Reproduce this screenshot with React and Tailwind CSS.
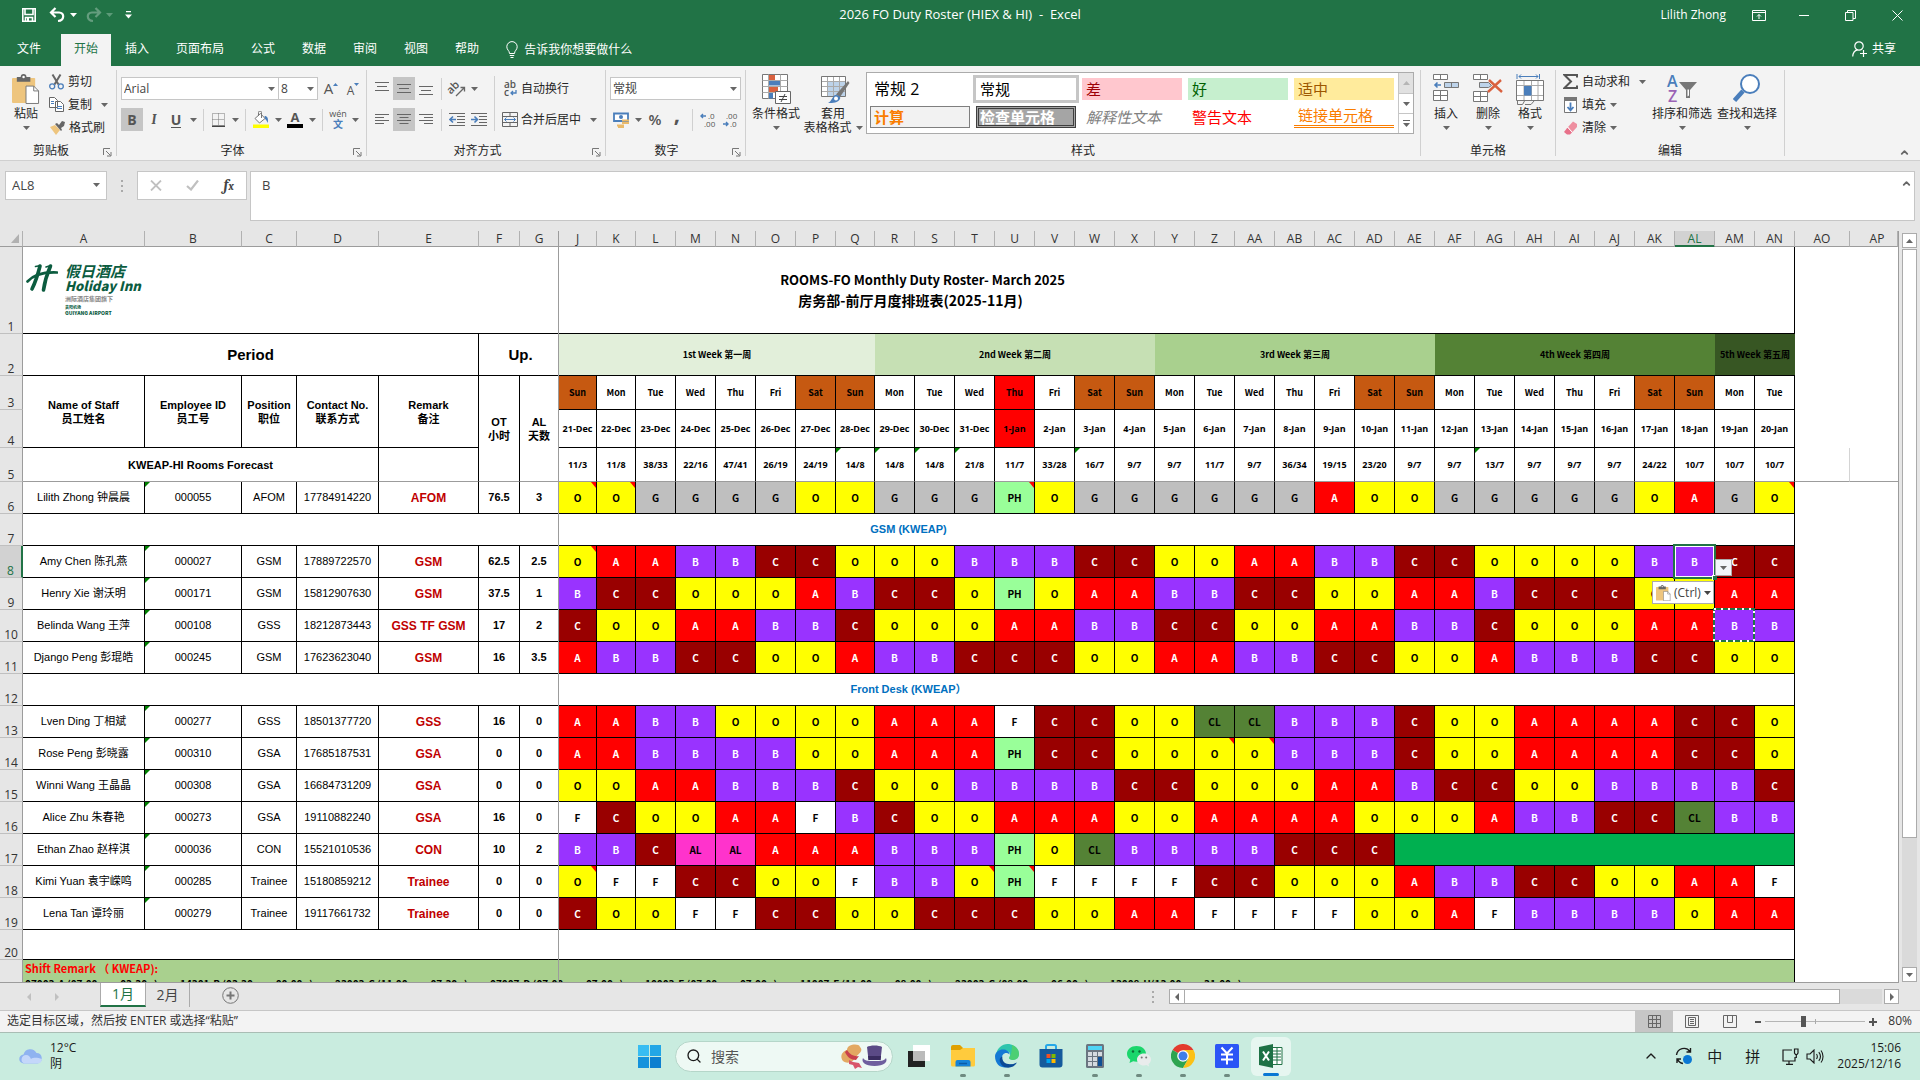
import { useState } from 'react';
import clsx from 'clsx';
import { Search, ChevronUp } from 'lucide-react';

const LEFT_COLS = [
  { name: 'A', width: 'w-[122px]' },
  { name: 'B', width: 'w-[97px]' },
  { name: 'C', width: 'w-[55px]' },
  { name: 'D', width: 'w-[82px]' },
  { name: 'E', width: 'w-[100px]' },
  { name: 'F', width: 'w-[41px]' },
  { name: 'G', width: 'w-[39px]' },
];

const DAY_COLS = 'J K L M N O P Q R S T U V W X Y Z AA AB AC AD AE AF AG AH AI AJ AK AL AM AN'.split(' ');
const WEEKDAYS = ['Sun', 'Mon', 'Tue', 'Wed', 'Thu', 'Fri', 'Sat'];
const FORECAST = '11/3 11/8 38/33 22/16 47/41 26/19 24/19 14/8 14/8 14/8 21/8 11/7 33/28 16/7 9/7 9/7 11/7 9/7 36/34 19/15 23/20 9/7 9/7 13/7 9/7 9/7 9/7 24/22 10/7 10/7 10/7'.split(' ');
const FORECAST_FLAGS = ['Q', 'R', 'S', 'T', 'W', 'AG'];

const WEEKS = [
  { label: '1st Week 第一周', span: 8, color: 'bg-[#e2efda]' },
  { label: '2nd Week 第二周', span: 7, color: 'bg-[#c6e0b4]' },
  { label: '3rd Week 第三周', span: 7, color: 'bg-[#a9d08e]' },
  { label: '4th Week 第四周', span: 7, color: 'bg-[#548235]' },
  { label: '5th Week 第五周', span: 2, color: 'bg-[#375623]' },
];

const SHIFT_COLORS = {
  A: 'bg-[#ff0000] text-white',
  B: 'bg-[#9933ff] text-white',
  C: 'bg-[#990000] text-white',
  O: 'bg-[#ffff00] text-black',
  G: 'bg-[#bfbfbf] text-black',
  F: 'bg-white text-black',
  PH: 'bg-[#99ff99] text-black',
  CL: 'bg-[#548235] text-black',
  AL: 'bg-[#ff33cc] text-black',
};

const ROWS = [
  { n: 6, name: 'Lilith Zhong 钟晨晨', id: '000055', pos: 'AFOM', tel: '17784914220', remark: 'AFOM', ot: '76.5', al: '3', notes: ['J', 'K', 'U', 'AN'],
    shifts: 'O O G G G G O O G G G PH O G G G G G G A O O G G G G G O A G O' },
  { n: 7, section: 'GSM (KWEAP)' },
  { n: 8, name: 'Amy Chen 陈孔燕', id: '000027', pos: 'GSM', tel: '17889722570', remark: 'GSM', ot: '62.5', al: '2.5', notes: ['J'],
    shifts: 'O A A B B C C O O O B B B C C O O A A B B C C O O O O B B C C' },
  { n: 9, name: 'Henry Xie 谢沃明', id: '000171', pos: 'GSM', tel: '15812907630', remark: 'GSM', ot: '37.5', al: '1',
    shifts: 'B C C O O O A B C C O PH O A A B B C C O O A A B C C C O O A A' },
  { n: 10, name: 'Belinda Wang 王萍', id: '000108', pos: 'GSS', tel: '18212873443', remark: 'GSS TF GSM', ot: '17', al: '2',
    shifts: 'C O O A A B B C O O O A A B B C C O O A A B B C O O O A A B B' },
  { n: 11, name: 'Django Peng 彭琨皓', id: '000245', pos: 'GSM', tel: '17623623040', remark: 'GSM', ot: '16', al: '3.5',
    shifts: 'A B B C C O O A B B C C C O O A A B B C C O O A B B B C C O O' },
  { n: 12, section: 'Front Desk (KWEAP）' },
  { n: 13, name: 'Lven Ding 丁相斌', id: '000277', pos: 'GSS', tel: '18501377720', remark: 'GSS', ot: '16', al: '0',
    shifts: 'A A B B O O O O A A A F C C O O CL CL B B B C O O A A A A C C O' },
  { n: 14, name: 'Rose Peng 彭晓露', id: '000310', pos: 'GSA', tel: '17685187531', remark: 'GSA', ot: '0', al: '0', notes: ['Z', 'AA'],
    shifts: 'A A B B B B O O A A A PH C C O O O O B B B C O O A A A A C C O' },
  { n: 15, name: 'Winni Wang 王晶晶', id: '000308', pos: 'GSA', tel: '16684731209', remark: 'GSA', ot: '0', al: '0',
    shifts: 'O O A A B B B C O O B B B B C C O O O A A B C C O O B B B B C' },
  { n: 16, name: 'Alice Zhu 朱春艳', id: '000273', pos: 'GSA', tel: '19110882240', remark: 'GSA', ot: '16', al: '0',
    shifts: 'F C O O A A F B C O O A A A O O A A A A O O O A B B C C CL B B' },
  { n: 17, name: 'Ethan Zhao 赵梓淇', id: '000036', pos: 'CON', tel: '15521010536', remark: 'CON', ot: '10', al: '2', blank: 10,
    shifts: 'B B C AL AL A A A B B B PH O CL B B B B C C C' },
  { n: 18, name: 'Kimi Yuan 袁宇嵘鸣', id: '000285', pos: 'Trainee', tel: '15180859212', remark: 'Trainee', ot: '0', al: '0', notes: ['J', 'T', 'U'],
    shifts: 'O F F C C O O F B B O PH F F F F C C O O O A B B C C O O A A F' },
  { n: 19, name: 'Lena Tan 谭玲丽', id: '000279', pos: 'Trainee', tel: '19117661732', remark: 'Trainee', ot: '0', al: '0',
    shifts: 'C O O F F C C O O C C C O O A A F F F F O O A F B B B B O A A' },
];

const SHIFT_TIMES = [
  ['07003-A (07:00', '03:30'],
  ['14301-B (03:30', '00:00'],
  ['23003-C (11:00', '07:30'],
  ['07007-D (07:00', '07:00'],
  ['10003-E (07:00', '07:00'],
  ['11007-F (11:00', '08:00'],
  ['23003-G (08:00', '06:00'],
  ['13008-H(13:00', '31:00'],
];

const ARIAL = "font-['Liberation_Sans','Noto_Sans_CJK_SC',sans-serif]";
const HEI = "font-['Noto_Sans_CJK_SC',sans-serif]";

/* ---------- small pieces ---------- */

function Caret({ className }) {
  return (
    <svg viewBox="0 0 7 4" className={clsx('h-1 w-[7px] shrink-0', className || 'text-[#666]')} fill="currentColor">
      <path d="M0 0h7L3.5 4z" />
    </svg>
  );
}

function CaretButton({ label }) {
  return (
    <button aria-label={label} className="flex h-full w-3 items-center justify-center"><Caret /></button>
  );
}

function Sep({ className }) {
  return <div className={clsx('ml-1 w-px shrink-0 bg-[#d0d0d0]', className || 'h-[22px]')} />;
}

function ToolButton({ label, active, className, children }) {
  return (
    <button
      aria-label={label}
      className={clsx('flex h-[23px] w-[22px] shrink-0 items-center justify-center', active && 'bg-[#c5c5c5]', className)}
    >
      {children}
    </button>
  );
}

function BigButton({ icon, lines, width }) {
  return (
    <button className={clsx('flex shrink-0 flex-col items-center pt-1', width)}>
      <span className="flex h-[30px] items-start justify-center">{icon}</span>
      <span className="mt-[3px] block h-[14px] whitespace-nowrap leading-[14px]">{lines[0]}</span>
      <span className="flex h-[14px] items-center gap-1 whitespace-nowrap leading-[14px]">{lines[1]}<Caret /></span>
    </button>
  );
}

function Group({ label, width, launcher, children }) {
  return (
    <section className={clsx('my-1 flex h-[86px] shrink-0 flex-col border-r border-[#d0d0d0]', width)}>
      <div className="flex h-[72px] shrink-0">{children}</div>
      <div className="relative h-[14px] text-center leading-[18px]">
        {label}
        {launcher && (
          <button aria-label={label + '设置'} className="absolute top-[6px] right-1">
            <svg width="9" height="9" viewBox="0 0 9 9" fill="none" stroke="#777">
              <path d="M.5 7V.5H7M3 3l4.500 4.500M8 4v4H4" />
            </svg>
          </button>
        )}
      </div>
    </section>
  );
}

/* ---------- title bar and tabs ---------- */

function TitleBar() {
  return (
    <header className="grid h-[34px] shrink-0 grid-cols-[1fr_auto_1fr] items-center bg-[#217346] text-white">
      <div className="flex items-center pl-[21px] pb-1">
        <button aria-label="保存">
          <svg width="16" height="16" viewBox="0 0 16 16" fill="none" stroke="#fff" strokeWidth="1.600">
            <path d="M1.800 1.800h12.400v12.400H1.800z" />
            <path d="M4 2v5.500h8V2M4.500 14v-3.500h7V14" />
            <path d="M6 11h2v3H6z" fill="#fff" stroke="none" />
          </svg>
        </button>
        <button aria-label="撤消" className="ml-3">
          <svg width="17" height="16" viewBox="0 0 17 16" fill="none" stroke="#fff" strokeWidth="2.200">
            <path d="M6.500 1L2 5.500 6.500 10M2.500 5.500h7.500c6 0 5.500 8-1 8.500" />
          </svg>
        </button>
        <Caret className="ml-1 text-white" />
        <button aria-label="恢复" className="ml-2 opacity-30">
          <svg width="17" height="16" viewBox="0 0 17 16" fill="none" stroke="#fff" strokeWidth="2.200">
            <path d="M10.500 1L15 5.500 10.500 10M14.500 5.500H7c-6 0-5.500 8 1 8.500" />
          </svg>
        </button>
        <Caret className="ml-1 text-[#5c9a78]" />
        <button aria-label="自定义快速访问工具栏" className="ml-3">
          <svg width="7" height="8" viewBox="0 0 7 8" fill="#fff"><path d="M1 0h5v1.300H1zM0 3.500h7L3.500 7.500z" /></svg>
        </button>
      </div>
      <h1 className="pb-1 text-[13px] whitespace-pre">2026 FO Duty Roster (HIEX &amp; HI)  -  Excel</h1>
      <div className="flex items-center justify-end pb-1">
        <span className="mr-[26px]">Lilith Zhong</span>
        <button aria-label="功能区显示选项" className="mr-[33px]">
          <svg width="14" height="11" viewBox="0 0 14 11" fill="none" stroke="#fff">
            <path d="M.5.5h13v10H.5zM.5 2.500h13M7 9V4.500M5 6.500l2-2 2 2" />
          </svg>
        </button>
        <button aria-label="最小化" className="mr-9"><span className="block h-px w-[10px] bg-white" /></button>
        <button aria-label="向下还原" className="mr-9">
          <svg width="11" height="11" viewBox="0 0 11 11" fill="none" stroke="#fff"><path d="M.5 2.500h7.500v8H.5zM2.500 2.500v-2h8v8H8" /></svg>
        </button>
        <button aria-label="关闭" className="mr-[17px]">
          <svg width="11" height="11" viewBox="0 0 11 11" stroke="#fff"><path d="M.5.5l10 10M10.500.5l-10 10" /></svg>
        </button>
      </div>
    </header>
  );
}

const TABS = ['开始', '插入', '页面布局', '公式', '数据', '审阅', '视图', '帮助'];

function TabBar({ tab, onTab }) {
  return (
    <nav className="flex h-8 shrink-0 items-stretch bg-[#217346] text-white">
      <button className="w-[61px] pr-[3px] pb-[2px]">文件</button>
      <div className="flex gap-px">
        {TABS.map((t) => (
          <button
            key={t}
            onClick={() => onTab(t)}
            className={clsx('px-[13px] pb-[2px]', t === tab && 'bg-[#f3f3f3] text-[#217346]')}
          >
            {t}
          </button>
        ))}
      </div>
      <button className="ml-[14px] flex items-center gap-[6px]">
        <svg width="12" height="18" viewBox="0 0 12 18" fill="none" stroke="#fff">
          <path d="M3.500 12.500C3.500 9.500.8 9 .8 5.800a5.200 5.200 0 0 1 10.400 0c0 3.200-2.700 3.700-2.700 6.700zM3.800 14.500h4.400M4.500 16.500h3" />
        </svg>
        告诉我你想要做什么
      </button>
      <button className="mr-6 ml-auto flex items-center gap-[5px] pb-[2px]">
        <svg width="15" height="16" viewBox="0 0 15 16" fill="none" stroke="#fff" strokeWidth="1.200">
          <circle cx="7" cy="5" r="4.200" />
          <path d="M.7 15.500c.3-4 2-6 4.800-6.600M11.500 9v7M8 12.500h7" />
        </svg>
        共享
      </button>
    </nav>
  );
}

/* ---------- ribbon ---------- */

function AlignIcon({ d }) {
  return <svg width="14" height="13" viewBox="0 0 14 13" stroke="#666" fill="none"><path d={d} /></svg>;
}

function PasteIcon({ className }) {
  return (
    <svg viewBox="0 0 29 31" className={className}>
      <rect x="0" y="4" width="24" height="26" rx="1" fill="#eec57e" />
      <path d="M5 8V3h4a3 3 0 0 1 6 0h4v5z" fill="#666" />
      <circle cx="12" cy="3" r="1.300" fill="#fff" />
      <path d="M14.500 12.500h8l5 5v13h-13z" fill="#fff" stroke="#777" />
      <path d="M22.500 12.500v5h5" fill="none" stroke="#777" />
    </svg>
  );
}

function ClipboardGroup() {
  const item = 'flex h-[23px] shrink-0 items-center gap-1 whitespace-nowrap';
  return (
    <Group label="剪贴板" width="w-[117px] pr-[14px] [&_button.absolute]:-right-[10px]" launcher>
      <BigButton width="ml-2 w-9" icon={<PasteIcon className="h-[30px] w-7" />} lines={['粘贴', '']} />
      <div className="ml-[5px] w-16 shrink-0">
        <button className={item}>
          <svg width="15" height="16" viewBox="0 0 15 16" fill="none" className="shrink-0">
            <path d="M3.500.5l6 10M11.500.5l-6 10" stroke="#666" strokeWidth="2" />
            <circle cx="3.200" cy="12.300" r="2.500" stroke="#4a7ebb" strokeWidth="1.300" />
            <circle cx="11.800" cy="12.300" r="2.500" stroke="#4a7ebb" strokeWidth="1.300" />
          </svg>
          剪切
        </button>
        <div className="flex items-center">
          <button className={item}>
            <svg width="15" height="15" viewBox="0 0 15 15" fill="#fff" stroke="#666" className="shrink-0">
              <path d="M.5.5h5l3 3v7h-8zM6.500 4.500h5l3 3v7h-8z" />
              <path d="M2 4.500h3M2 6.500h3M8 9.500h5M8 11.500h5" stroke="#4a7ebb" />
            </svg>
            复制
          </button>
          <span className="ml-[6px]"><CaretButton label="复制选项" /></span>
        </div>
        <button className={item}>
          <svg width="16" height="15" viewBox="0 0 16 15" className="shrink-0">
            <path d="M1 7l5-2 5 5-4 5z" fill="#eec57e" />
            <path d="M6 4l2-1 2 2 3-4 3 1-1 4-3 2 1 2-1 1z" fill="#666" />
          </svg>
          格式刷
        </button>
      </div>
    </Group>
  );
}

function FontGroup() {
  return (
    <Group label="字体" width="w-[250px] pr-[18px] [&_button.absolute]:-right-[14px]" launcher>
      <div className="flex flex-col gap-2 pt-[7px] pl-1">
        <div className="flex h-[23px] items-center">
          <div className="relative">
            <select aria-label="字体" className="h-[23px] w-[158px] appearance-none border border-[#c6c6c6] bg-white pl-[2px] text-[#444]">
              <option>Arial</option>
            </select>
            <Caret className="pointer-events-none absolute top-[10px] right-1 text-[#666]" />
          </div>
          <div className="relative -ml-px">
            <select aria-label="字号" className="h-[23px] w-10 appearance-none border border-[#c6c6c6] bg-white pl-[2px] text-[#444]">
              <option>8</option>
            </select>
            <Caret className="pointer-events-none absolute top-[10px] right-1 text-[#666]" />
          </div>
          <ToolButton label="增大字号" className="ml-[2px]">
            <span className="text-[15px] text-[#555]">A</span>
            <svg width="5" height="12" viewBox="0 0 5 12"><path d="M0 3h5L2.500 0z" fill="#4a7ebb" /></svg>
          </ToolButton>
          <ToolButton label="减小字号">
            <span className="pt-1 text-[12px] text-[#555]">A</span>
            <svg width="5" height="12" viewBox="0 0 5 12"><path d="M0 0h5L2.500 3z" fill="#4a7ebb" /></svg>
          </ToolButton>
        </div>
        <div className="flex h-[23px] items-center text-[14px] text-[#555]">
          <ToolButton label="加粗" active><b>B</b></ToolButton>
          <ToolButton label="倾斜"><i className="font-serif font-bold">I</i></ToolButton>
          <ToolButton label="下划线"><span className="border-b border-[#555] font-bold leading-[15px]">U</span></ToolButton>
          <CaretButton label="下划线选项" />
          <Sep />
          <ToolButton label="边框" className="ml-[3px]">
            <svg width="13" height="14" viewBox="0 0 13 14" fill="none" stroke="#777">
              <path d="M.5.5h12v12H.5zM6.500.5v12M.5 6.500h12" strokeDasharray="1 1" />
              <path d="M0 13.300h13" stroke="#444" strokeWidth="1.400" />
            </svg>
          </ToolButton>
          <CaretButton label="边框选项" />
          <Sep />
          <ToolButton label="填充颜色" className="ml-1">
            <svg width="16" height="17" viewBox="0 0 16 17" fill="none">
              <path d="M2 7.500L7.500 2.500l4.500 5-5.500 4.500z" stroke="#777" fill="#fff" />
              <path d="M5.500 5V1.500a1.500 1.500 0 0 1 3 0V7" stroke="#777" />
              <path d="M11.500 5c3 0 4 2.500 3.300 7-1-2-1.300-3-2.800-4z" fill="#4a7ebb" />
              <path d="M0 13.500h16V17H0z" fill="#ff0" />
            </svg>
          </ToolButton>
          <CaretButton label="填充颜色选项" />
          <ToolButton label="字体颜色" className="flex-col">
            <b className="text-[13px] leading-[12px]">A</b>
            <span className="mt-px h-1 w-4 bg-black" />
          </ToolButton>
          <CaretButton label="字体颜色选项" />
          <Sep />
          <ToolButton label="拼音" className="ml-1 flex-col">
            <span className="text-[9px] leading-[9px]">wén</span>
            <span className="text-[10px] leading-[12px] font-bold text-[#4a7ebb]">文</span>
          </ToolButton>
          <CaretButton label="拼音选项" />
        </div>
      </div>
    </Group>
  );
}

function AlignGroup() {
  return (
    <Group label="对齐方式" width="w-[239px] pr-[17px] [&_button.absolute]:-right-[13px]" launcher>
      <div className="flex w-[127px] shrink-0 flex-col gap-2 pt-[7px] pl-1">
        <div className="flex h-[23px] items-center">
          <ToolButton label="顶端对齐"><AlignIcon d="M0 .5h14M2 4.500h10M0 8.500h14" /></ToolButton>
          <ToolButton label="垂直居中" active><AlignIcon d="M0 2.500h14M2 6.500h10M0 10.500h14" /></ToolButton>
          <ToolButton label="底端对齐"><AlignIcon d="M0 4.500h14M2 8.500h10M0 12.500h14" /></ToolButton>
          <Sep />
          <ToolButton label="方向" className="ml-1">
            <svg width="17" height="16" viewBox="0 0 17 16" fill="none" stroke="#666" className="overflow-visible">
              <text x="-1" y="9" fontSize="11" fontWeight="600" fill="#555" stroke="none" transform="rotate(-45 6 8)">ab</text>
              <path d="M7 15l8-8M15.500 10.500V6.500H11.500" strokeWidth="1.300" />
            </svg>
          </ToolButton>
          <CaretButton label="方向选项" />
        </div>
        <div className="flex h-[23px] items-center">
          <ToolButton label="左对齐"><AlignIcon d="M0 1.500h14M0 4.500h9M0 7.500h14M0 10.500h9" /></ToolButton>
          <ToolButton label="居中" active><AlignIcon d="M0 1.500h14M2.500 4.500h9M0 7.500h14M2.500 10.500h9" /></ToolButton>
          <ToolButton label="右对齐"><AlignIcon d="M0 1.500h14M5 4.500h9M0 7.500h14M5 10.500h9" /></ToolButton>
          <Sep />
          <ToolButton label="减少缩进量" className="ml-1">
            <svg width="16" height="13" viewBox="0 0 16 13" fill="none" stroke="#666">
              <path d="M0 .5h16M8 3.500h8M8 6.500h8M8 9.500h8M0 12.500h16" />
              <path d="M7 6.500H1M4 3.500l-3 3 3 3" stroke="#4a7ebb" strokeWidth="1.600" />
            </svg>
          </ToolButton>
          <ToolButton label="增加缩进量">
            <svg width="16" height="13" viewBox="0 0 16 13" fill="none" stroke="#666">
              <path d="M0 .5h16M8 3.500h8M8 6.500h8M8 9.500h8M0 12.500h16" />
              <path d="M0 6.500h6M3.500 3.500l3 3-3 3" stroke="#4a7ebb" strokeWidth="1.600" />
            </svg>
          </ToolButton>
        </div>
      </div>
      <div className="mt-[6px] h-[55px] w-px shrink-0 bg-[#d0d0d0]" />
      <div className="flex shrink-0 flex-col gap-2 pt-[7px] pl-[7px]">
        <button className="flex h-[23px] items-center gap-[3px] whitespace-nowrap">
          <svg width="16" height="17" viewBox="0 0 16 17" fill="#555" className="overflow-visible">
            <text x="2" y="8" fontSize="10" fontWeight="600">ab</text>
            <text x="2" y="16" fontSize="10" fontWeight="600">c</text>
            <path d="M14 10v3H9.500M11 11l-2 2 2 2" fill="none" stroke="#4a7ebb" strokeWidth="1.300" />
          </svg>
          自动换行
        </button>
        <div className="flex h-[23px] items-center">
          <button className="flex h-full items-center gap-[3px] whitespace-nowrap">
            <svg width="16" height="15" viewBox="0 0 16 15" fill="none" stroke="#666">
              <path d="M.5.5h15v14H.5zM.5 4.500h15M.5 10.500h15M8 .5v4M8 10.500v4" />
              <path d="M2.500 7.500h11M4.500 5.500l-2 2 2 2M11.500 5.500l2 2-2 2" stroke="#4a7ebb" />
            </svg>
            合并后居中
          </button>
          <span className="ml-[6px]"><CaretButton label="合并选项" /></span>
        </div>
      </div>
    </Group>
  );
}

function NumberGroup() {
  return (
    <Group label="数字" width="w-[140px] pr-[18px] [&_button.absolute]:-right-[14px]" launcher>
      <div className="flex flex-col gap-2 pt-[7px] pl-1">
        <div className="relative w-[131px]">
          <select aria-label="数字格式" className="h-[23px] w-full appearance-none border border-[#c6c6c6] bg-white pl-[2px] text-[#444]">
            <option>常规</option>
          </select>
          <Caret className="pointer-events-none absolute top-[10px] right-1 text-[#666]" />
        </div>
        <div className="flex h-[23px] items-center text-[#555]">
          <ToolButton label="会计数字格式">
            <svg width="17" height="16" viewBox="0 0 17 16" fill="none">
              <path d="M1 1.500h14v7.500H1z" fill="#fff" stroke="#4a7ebb" strokeWidth="1.800" />
              <circle cx="8" cy="5" r="2" fill="#4a7ebb" />
              <path d="M9 8.500h7M9 11h7M4 13.500h7M5 15.500h6" stroke="#e9b96a" strokeWidth="1.800" />
            </svg>
          </ToolButton>
          <CaretButton label="会计数字格式选项" />
          <ToolButton label="百分比样式"><span className="text-[15px] font-semibold">%</span></ToolButton>
          <ToolButton label="千位分隔样式"><span className="pb-3 text-[22px] font-bold">,</span></ToolButton>
          <Sep />
          <ToolButton label="增加小数位数" className="ml-1">
            <svg width="16" height="16" viewBox="0 0 16 16" fill="#555" fontSize="8" className="overflow-visible">
              <text x="8" y="7">.0</text><text x="4" y="15">.00</text>
              <path d="M6 4H1M3 2L1 4l2 2" fill="none" stroke="#4a7ebb" strokeWidth="1.400" />
            </svg>
          </ToolButton>
          <ToolButton label="减少小数位数">
            <svg width="16" height="16" viewBox="0 0 16 16" fill="#555" fontSize="8" className="overflow-visible">
              <text x="4" y="7">.00</text><text x="8" y="15">.0</text>
              <path d="M1 12h5M4 10l2 2-2 2" fill="none" stroke="#4a7ebb" strokeWidth="1.400" />
            </svg>
          </ToolButton>
        </div>
      </div>
    </Group>
  );
}

const CELL_STYLES = [
  { name: '常规 2', cls: 'pl-1 text-[16px] text-black' },
  { name: '常规', cls: 'pl-1 text-[15px] text-black outline-3 outline-[#c6c6c6]' },
  { name: '差', cls: 'pl-1 text-[15px] bg-[#ffc7ce] text-[#9c0006]' },
  { name: '好', cls: 'pl-1 text-[15px] bg-[#c6efce] text-[#006100]' },
  { name: '适中', cls: 'pl-1 text-[15px] bg-[#ffeb9c] text-[#9c5700]' },
  { name: '计算', cls: 'border border-[#7f7f7f] bg-[#f2f2f2] pl-[3px] text-[15px] font-bold text-[#fa7d00]' },
  { name: '检查单元格', cls: 'border-3 border-double border-[#3f3f3f] bg-[#a5a5a5] pl-px text-[15px] font-bold text-white' },
  { name: '解释性文本', cls: 'pl-1 text-[15px] text-[#7f7f7f] italic' },
  { name: '警告文本', cls: 'pl-1 text-[15px] text-[#ff0000]' },
  { name: '链接单元格', cls: 'border-b-3 border-double border-[#fa7d00] pl-1 text-[15px] text-[#fa7d00]' },
];

function StylesGroup() {
  return (
    <Group label="样式" width="w-[675px]">
      <BigButton
        width="ml-[5px] w-[50px]"
        lines={['条件格式', '']}
        icon={
          <svg width="29" height="30" viewBox="0 0 29 30" fill="none" stroke="#777">
            <path d="M.5.500h25v24H.5z" fill="#fff" />
            <path d="M7 1h6v5H7zM7 12h9v6H7z" fill="#d9613f" stroke="none" />
            <path d="M7 6.500h11v5H7zM7 18.500h4v6H7z" fill="#4a7ebb" stroke="none" />
            <path d="M6.500.5v24M18.500.5v24M.5 6.500h25M.5 12.500h25M.5 18.500h25" stroke="#aaa" />
            <path d="M13.500 17.500h15v12h-15z" fill="#fff" stroke="#666" />
            <path d="M17 22.500h8M17 25.500h8M23 20l-4 8" stroke="#444" />
          </svg>
        }
      />
      <BigButton
        width="ml-1 w-[56px]"
        lines={['套用', '表格格式']}
        icon={
          <svg width="29" height="30" viewBox="0 0 29 30" fill="none" className="ml-1">
            <path d="M.5 2.500h24v20H.5z" fill="#fff" stroke="#777" />
            <path d="M7 8h17v14H7z" fill="#bdd3ea" />
            <path d="M6.500 3v19M12.500 3v19M18.500 3v19M1 7.500h23M1 12.500h23M1 17.500h23" stroke="#aaa" />
            <path d="M27 7l1.500 2-9.500 14-4-2.500z" fill="#777" />
            <path d="M14 21c4 0 6 2 5 4-2 4-7 4-12 4 4-2 4-6 7-8z" fill="#4a7ebb" />
            <circle cx="15" cy="24.500" r="2" fill="#fff" />
          </svg>
        }
      />
      <div className="mt-[2px] ml-[5px] flex h-[62px] border border-[#ababab] bg-white">
        <div className="grid w-[531px] grid-cols-[repeat(5,100px)] gap-[6px] py-[5px] pl-[3px]">
          {CELL_STYLES.map((s) => (
            <button key={s.name} className={clsx('flex h-[22px] items-center text-left leading-none whitespace-nowrap', s.cls)}>
              {s.name}
            </button>
          ))}
        </div>
        <div className="flex w-[15px] flex-col divide-y divide-[#c6c6c6] border-l border-[#c6c6c6]">
          <button aria-label="上一行" className="flex h-[21px] items-center justify-center bg-[#e1e1e1]"><Caret className="rotate-180 text-[#b5b5b5]" /></button>
          <button aria-label="下一行" className="flex flex-1 items-center justify-center"><Caret /></button>
          <button aria-label="其他样式" className="flex flex-1 flex-col items-center justify-center gap-[2px]"><span className="h-px w-[7px] bg-[#666]" /><Caret /></button>
        </div>
      </div>
    </Group>
  );
}

function CellsGroup() {
  return (
    <Group label="单元格" width="w-[135px]">
      <BigButton
        width="ml-1 w-[42px]"
        lines={['插入', '']}
        icon={
          <svg width="27" height="28" viewBox="0 0 27 28" fill="#fff" stroke="#777">
            <path d="M.5.500h14v5H.5zM7.500.5v5M.5 16.500h14v10H.5zM7.500 16.500v10M.5 21.500h14" />
            <path d="M11.500 8.500h14v5h-14zM18.500 8.500v5" fill="#bdd3ea" />
            <path d="M8 11H2M4.500 8.500L2 11l2.500 2.500" fill="none" stroke="#4a7ebb" strokeWidth="1.600" />
          </svg>
        }
      />
      <BigButton
        width="w-[42px]"
        lines={['删除', '']}
        icon={
          <svg width="30" height="28" viewBox="0 0 30 28" fill="#fff" stroke="#777">
            <path d="M.5.500h14v5H.5zM7.500.5v5M.5 17.500h14v10H.5zM7.500 17.500v10M.5 22.500h14" />
            <path d="M6.500 8.500h9l3 3-3 2h-9z" fill="#bdd3ea" />
            <path d="M16 6l13 12M28 6L15 18" fill="none" stroke="#d9613f" strokeWidth="2.400" />
          </svg>
        }
      />
      <BigButton
        width="w-[42px]"
        lines={['格式', '']}
        icon={
          <svg width="29" height="31" viewBox="0 0 29 31" fill="none" stroke="#777">
            <path d="M.5 6.500h27v20H.5z" fill="#fff" />
            <path d="M8 7v19M15.500 7v19M22 7v19M1 11.500h26M1 21.500h26" stroke="#aaa" />
            <path d="M8 12h7.500v9.500H8z" fill="#4a7ebb" stroke="none" />
            <path d="M1 0v5M23.500 0v5M3 2.500h19M5 .5l-2 2 2 2M20 .5l2 2-2 2" stroke="#4a7ebb" />
            <path d="M1.500 27v3.500h5l2-3.500M9 30.500h6l3-3.500" />
          </svg>
        }
      />
    </Group>
  );
}

function EditGroup() {
  const item = 'flex h-[23px] items-center gap-1 whitespace-nowrap';
  return (
    <Group label="编辑" width="w-[229px]">
      <div className="w-[94px] shrink-0 pl-[7px]">
        <div className="flex">
          <button className={item}>
            <svg width="15" height="15" viewBox="0 0 15 15" fill="none" stroke="#555" strokeWidth="2">
              <path d="M14 3.500V1H1.500l6.500 6.500L1.500 14H14v-2.500" />
            </svg>
            自动求和
          </button>
          <span className="ml-[6px] flex"><CaretButton label="求和选项" /></span>
        </div>
        <button className={item}>
          <svg width="15" height="16" viewBox="0 0 15 16" fill="none">
            <path d="M1.500.5h12v15h-12z" fill="#fff" stroke="#777" />
            <path d="M1 0h13v4H1z" fill="#777" />
            <path d="M7.500 5.500v8M4.500 10l3 3.300 3-3.300" stroke="#4a7ebb" strokeWidth="1.800" />
          </svg>
          填充<Caret />
        </button>
        <button className={item}>
          <svg width="15" height="14" viewBox="0 0 15 14">
            <path d="M5 6l5-5.500 4 2.500v3l-5 5.500z" fill="#ee8fa0" />
            <path d="M4.500 6.500l4.500 5-2 2H4L1 11z" fill="#e8718a" />
            <path d="M4.500 6l5 5.500" stroke="#fff" />
          </svg>
          清除<Caret />
        </button>
      </div>
      <BigButton
        width="w-16"
        lines={['排序和筛选', '']}
        icon={
          <svg width="30" height="29" viewBox="0 0 30 29" className="overflow-visible">
            <text x="0" y="13" fontSize="16" fontWeight="600" fill="#4a7ebb">A</text>
            <text x="1" y="28" fontSize="16" fontWeight="600" fill="#9b63b5">Z</text>
            <path d="M12 8h18l-7 8v8h-4v-8z" fill="#777" />
            <path d="M20.500 15.500v7l1.500-1v-6z" fill="#fff" />
          </svg>
        }
      />
      <BigButton
        width="w-[66px]"
        lines={['查找和选择', '']}
        icon={
          <svg width="28" height="29" viewBox="0 0 28 29" fill="none" stroke="#4a7ebb">
            <circle cx="17" cy="10" r="9" strokeWidth="2" fill="#fff" />
            <path d="M10 17L1.500 26.500" strokeWidth="4.500" />
          </svg>
        }
      />
    </Group>
  );
}

function Ribbon() {
  return (
    <div className="flex h-[95px] shrink-0 overflow-hidden border-b border-[#d0d0d0] bg-[#f3f3f3] text-[#262626]">
      <ClipboardGroup />
      <FontGroup />
      <AlignGroup />
      <NumberGroup />
      <StylesGroup />
      <CellsGroup />
      <EditGroup />
      <button aria-label="折叠功能区" className="mr-[10px] mb-[2px] ml-auto self-end text-[#666]"><ChevronUp size={11} strokeWidth={4} /></button>
    </div>
  );
}

/* ---------- formula bar ---------- */

function FormulaBar({ value, onChange }) {
  return (
    <div className="flex h-[70px] shrink-0 items-start bg-[#e6e6e6] pt-[10px] pr-[5px] pl-[5px] text-[13px] text-[#444]">
      <div className="relative">
        <input aria-label="名称框" defaultValue="AL8" className="h-[29px] w-[102px] border border-[#c6c6c6] bg-white pb-[2px] pl-[6px]" />
        <Caret className="absolute top-3 right-[7px] text-[#666]" />
      </div>
      <div className="mx-[14px] mt-[9px] flex w-[2px] flex-col gap-[3px]">
        <span className="h-[2px] bg-[#aaa]" />
        <span className="h-[2px] bg-[#aaa]" />
        <span className="h-[2px] bg-[#aaa]" />
      </div>
      <div className="flex h-[29px] w-[110px] shrink-0 items-center justify-around border border-[#c6c6c6] bg-white">
        <button aria-label="取消">
          <svg width="12" height="11" viewBox="0 0 12 11" stroke="#c0c0c0" strokeWidth="1.800"><path d="M1 .5l10 10M11 .5l-10 10" /></svg>
        </button>
        <button aria-label="输入">
          <svg width="13" height="11" viewBox="0 0 13 11" fill="none" stroke="#c0c0c0" strokeWidth="2.200"><path d="M1 6l4 3.500L12 .5" /></svg>
        </button>
        <button aria-label="插入函数" className="font-serif text-[15px] font-bold italic">f<span className="text-[11px]">x</span></button>
      </div>
      <div className="relative ml-[3px] flex-1">
        <textarea
          aria-label="编辑栏"
          value={value}
          onChange={(e) => onChange(e.target.value)}
          className="block h-[50px] w-full resize-none border border-[#c6c6c6] bg-white pt-[3px] pl-[11px] leading-[20px]"
        />
        <ChevronUp size={11} strokeWidth={4} className="absolute top-[7px] right-[3px] text-[#666]" />
      </div>
    </div>
  );
}

/* ---------- sheet ---------- */

function ErrorFlag() {
  return <span className="absolute top-0 left-0 border-t-5 border-r-5 border-t-[#008000] border-r-transparent" />;
}

function NoteFlag() {
  return <span className="absolute top-0 right-0 border-t-6 border-l-5 border-t-[#ff0000] border-l-transparent" />;
}

function RowHead({ n, selected }) {
  return (
    <th
      scope="row"
      className={clsx(
        'border-r border-b border-b-[#c0c0c0] text-center align-bottom text-[12px] leading-[12px] font-normal',
        selected ? 'border-r-2 border-r-[#217346] bg-[#d2d2d2] text-[#217346]' : 'border-r-[#9c9c9c] bg-[#e6e6e6] text-[#333]'
      )}
    >
      {n}
    </th>
  );
}

// empty columns right of the roster
function Tail() {
  return (
    <>
      <td />
      <td />
    </>
  );
}

function Logo() {
  return (
    <div className="absolute top-[16px] left-[3px] flex items-start text-left text-[#0b5c3f]" role="img" aria-label="Holiday Inn 假日酒店">
      <svg width="32" height="30" viewBox="0 0 32 30" fill="none" stroke="#0b5c3f" strokeLinecap="round">
        <path d="M14 3C12 11 9.500 19 6 26" strokeWidth="3.600" />
        <path d="M24.500 3C21 11 18.500 20 17.500 27" strokeWidth="3.600" />
        <path d="M9.500 3.500l4-.8M20 4l4-1.200" strokeWidth="1.600" />
        <path d="M1.500 18.500C8 11.500 20 9 31 9.500" strokeWidth="2.600" />
      </svg>
      <div className="ml-[7px] whitespace-nowrap">
        <div className="text-[15px] leading-[15px] font-bold italic">假日酒店</div>
        <div className="text-[13px] leading-[15px] font-extrabold italic">Holiday Inn</div>
        <div className="mt-[2px] text-[6px] leading-[7px] text-[#888]">洲际酒店集团旗下</div>
        <div className="mt-[3px] text-[4px] leading-[5px] font-bold">贵阳机场</div>
        <div className="text-[5px] leading-[5px] font-extrabold">GUIYANG AIRPORT</div>
      </div>
    </div>
  );
}

function PasteOptions() {
  return (
    <button className="absolute top-[35px] -left-[23px] z-20 flex h-[23px] w-[62px] items-center gap-[3px] border border-[#ababab] bg-white pl-[3px] font-['Open_Sans',sans-serif] text-[12px] font-normal text-[#444]">
      <PasteIcon className="h-4 w-[15px]" />
      (Ctrl)
      <Caret className="text-[#444]" />
    </button>
  );
}

function ShiftCell({ col, row, code, note }) {
  const active = col === 'AL' && row === 8;
  const copied = col === 'AM' && row === 10;
  return (
    <td className={clsx('relative border-r border-b border-black text-center text-[10px] font-bold', HEI, SHIFT_COLORS[code])}>
      {code}
      {note && <NoteFlag />}
      {copied && (
        <svg viewBox="0 0 42 34" className="absolute -top-[2px] -left-[2px] z-10 h-[34px] w-[42px]" fill="none" strokeWidth="2">
          <path d="M1 1h40v32H1z" stroke="#217346" />
          <path d="M1 1h40v32H1z" stroke="#fff" strokeDasharray="2 5" />
        </svg>
      )}
      {active && (
        <>
          <span className="absolute -top-[2px] -right-[2px] -bottom-[2px] -left-[2px] z-10 border-2 border-[#217346] shadow-[inset_0_0_0_1px_#fff]" />
          <span className="absolute -right-[3px] -bottom-[3px] z-10 h-[5px] w-[5px] border-t border-l border-white bg-[#217346]" />
          <button aria-label="选择班次" className="absolute top-[13px] -right-[18px] z-10 flex h-[17px] w-[17px] items-center justify-center border border-[#ababab] bg-[#f3f6fa]"><Caret /></button>
          <PasteOptions />
        </>
      )}
    </td>
  );
}

function StaffRow({ row }) {
  const cell = clsx('relative border-r border-b border-black text-center', ARIAL);
  return (
    <tr className="h-8 text-[11px]">
      <RowHead n={row.n} selected={row.n === 8} />
      <td className={cell}>{row.name}</td>
      <td className={cell}>{row.id}<ErrorFlag /></td>
      <td className={cell}>{row.pos}</td>
      <td className={cell}>{row.tel}</td>
      <td className={clsx(cell, 'text-[12px] font-bold text-[#c00000]')}>{row.remark}</td>
      <td className={clsx(cell, 'font-bold')}>{row.ot}</td>
      <td className={clsx(cell, 'font-bold')}>{row.al}</td>
      {row.shifts.split(' ').map((code, i) => (
        <ShiftCell key={i} col={DAY_COLS[i]} row={row.n} code={code} note={row.notes?.includes(DAY_COLS[i])} />
      ))}
      {row.blank && <td colSpan={row.blank} className="border-r border-b border-black bg-[#00b050]" />}
      <Tail />
    </tr>
  );
}

function Sheet() {
  const head = clsx('border-r border-b border-black text-center leading-[14px] font-bold', ARIAL);
  const colHead = 'border-r border-b border-r-[#b1b1b1] border-b-[#9c9c9c] bg-[#e6e6e6] p-0 text-[12px] leading-[14px] font-normal text-[#333]';
  return (
    <div className="relative min-w-0 flex-1 overflow-hidden border-r border-b border-[#9c9c9c] bg-white">
      <table className="w-full table-fixed border-separate border-spacing-0 text-[11px] text-black [&_td]:p-0 [&_th]:p-0">
        <colgroup>
          <col className="w-[23px]" />
          {LEFT_COLS.map((c) => <col key={c.name} className={c.width} />)}
          {DAY_COLS.map((c) => <col key={c} className={c === 'J' ? 'w-[38px]' : c === 'K' || c === 'Q' ? 'w-[39px]' : 'w-[40px]'} />)}
          <col className="w-[55px]" />
          <col />
        </colgroup>
        <thead>
          <tr className="h-4">
            <th className={colHead}>
              <svg width="8" height="9" viewBox="0 0 8 9" className="ml-auto mr-[3px]"><path d="M8 0v9H0z" fill="#b1b1b1" /></svg>
            </th>
            {[...LEFT_COLS.map((c) => c.name), ...DAY_COLS, 'AO', 'AP'].map((c) => (
              <th
                key={c}
                scope="col"
                className={clsx(
                  colHead,
                  c === 'AL' && 'bg-[#d2d2d2]! text-[#217346]! shadow-[inset_0_-1px_0_#217346] border-b-[#217346]!',
                  c === 'AP' && 'pl-[7px]!'
                )}
              >
                {c}
              </th>
            ))}
          </tr>
        </thead>
        <tbody>
          <tr className="h-[87px]">
            <RowHead n={1} />
            <td colSpan={38} className={clsx('relative border-r border-b border-black text-center leading-[20px] font-bold', HEI)}>
              <Logo />
              <div className="pl-7 text-[13px]">ROOMS-FO Monthly Duty Roster- March 2025</div>
              <div className="pl-1 text-[14px]">房务部-前厅月度排班表(2025-11月)</div>
            </td>
            <Tail />
          </tr>
          <tr className="h-[42px]">
            <RowHead n={2} />
            <td colSpan={5} className={clsx(head, 'text-[15px]')}>Period</td>
            <td colSpan={2} className={clsx(head, 'pl-1! text-[15px]')}>Up.</td>
            {WEEKS.map((w) => (
              <td key={w.label} colSpan={w.span} className={clsx('border-b border-black text-center text-[9px] font-bold whitespace-nowrap', HEI, w.color)}>
                {w.label}
              </td>
            ))}
            <Tail />
          </tr>
          <tr className="h-[34px]">
            <RowHead n={3} />
            <td rowSpan={2} className={head}>Name of Staff<br />员工姓名</td>
            <td rowSpan={2} className={head}>Employee ID<br />员工号</td>
            <td rowSpan={2} className={head}>Position<br />职位</td>
            <td rowSpan={2} className={head}>Contact No.<br />联系方式</td>
            <td rowSpan={2} className={head}>Remark<br />备注</td>
            <td rowSpan={3} className={clsx(head, 'border-b-[#9c9c9c]')}>OT<br />小时</td>
            <td rowSpan={3} className={clsx(head, 'border-b-[#9c9c9c]')}>AL<br />天数</td>
            {DAY_COLS.map((c, i) => (
              <td
                key={c}
                className={clsx(
                  'border-r border-b border-black text-center text-[9px] font-bold',
                  HEI,
                  (i % 7 === 0 || i % 7 === 6) && 'bg-[#c65911]',
                  c === 'U' && 'bg-[#ff0000]'
                )}
              >
                {WEEKDAYS[i % 7]}
              </td>
            ))}
            <Tail />
          </tr>
          <tr className="h-[38px]">
            <RowHead n={4} />
            {DAY_COLS.map((c, i) => (
              <td key={c} className={clsx('border-r border-b border-black text-center text-[9px] font-bold whitespace-nowrap', c === 'U' && 'bg-[#ff0000]')}>
                {i < 11 ? `${21 + i}-Dec` : `${i - 10}-Jan`}
              </td>
            ))}
            <Tail />
          </tr>
          <tr className="h-[34px]">
            <RowHead n={5} />
            <td colSpan={4} className={clsx(head, 'border-b-[#9c9c9c]')}>KWEAP-HI Rooms Forecast</td>
            <td className={clsx(head, 'border-b-[#9c9c9c]')} />
            {DAY_COLS.map((c, i) => (
              <td key={c} className="relative border-r border-b border-r-black border-b-[#9c9c9c] text-center text-[9px] font-bold">
                {FORECAST[i]}
                {FORECAST_FLAGS.includes(c) && <ErrorFlag />}
              </td>
            ))}
            <td className="border-r border-b border-r-[#d4d4d4] border-b-[#9c9c9c]" />
            <td className="border-b border-[#9c9c9c]" />
          </tr>
          {ROWS.map((row) =>
            row.section ? (
              <tr key={row.n} className="h-8">
                <RowHead n={row.n} />
                <td colSpan={38} className={clsx('border-r border-b border-black text-center font-bold text-[#0070c0]', ARIAL)}>{row.section}</td>
                <Tail />
              </tr>
            ) : (
              <StaffRow key={row.n} row={row} />
            )
          )}
          <tr className="h-[30px]">
            <RowHead n={20} />
            <td colSpan={38} className="border-r border-b border-black" />
            <Tail />
          </tr>
          <tr className="h-12">
            <RowHead />
            <td colSpan={38} className={clsx('border-r border-black bg-[#a9d08e] align-top font-bold whitespace-pre', HEI)}>
              <div className="pl-[2px] leading-[16px] text-[#ff0000]">Shift Remark （ KWEAP):</div>
              <div className="flex pl-[2px] text-[10px] leading-[16px]">
                {SHIFT_TIMES.map(([from, to]) => (
                  <span key={from} className="w-[155px] shrink-0">{from}   —   {to}   )</span>
                ))}
              </div>
            </td>
            <Tail />
          </tr>
        </tbody>
      </table>
      {/* freeze pane line */}
      <div className="absolute top-0 bottom-0 left-[558px] z-10 w-px bg-[#9c9c9c]" />
    </div>
  );
}

function VerticalScroll() {
  const btn = 'flex h-[15px] shrink-0 items-center justify-center border border-[#ababab] bg-white';
  return (
    <div className="flex w-[21px] shrink-0 flex-col bg-[#e6e6e6] pr-[3px] pl-[3px] pt-[2px] pb-[1px]">
      <button aria-label="向上滚动" className={btn}><Caret className="rotate-180 text-[#666]" /></button>
      <div className="mt-px flex flex-1 flex-col bg-[#dadada]">
        <div className="h-[82%] border border-[#ababab] bg-white" />
      </div>
      <button aria-label="向下滚动" className={btn}><Caret /></button>
    </div>
  );
}

/* ---------- bottom bars ---------- */

function SheetTabs({ sheet, onSheet }) {
  return (
    <div className="flex h-7 shrink-0 items-start border-b border-[#c6c6c6] bg-[#e6e6e6] text-[14px] text-[#444]">
      <div className="flex h-full w-[100px] items-center gap-6 pl-[27px] text-[#c0c0c0]">
        <svg width="4" height="8" viewBox="0 0 4 8" fill="currentColor"><path d="M4 0v8L0 4z" /></svg>
        <svg width="4" height="8" viewBox="0 0 4 8" fill="currentColor"><path d="M0 0v8l4-4z" /></svg>
      </div>
      {['1月', '2月'].map((s) => (
        <button
          key={s}
          onClick={() => onSheet(s)}
          className={clsx(
            'h-6 leading-[20px]',
            s === sheet ? 'w-[46px] border-x border-b-2 border-x-[#ababab] border-b-[#217346] bg-white text-[#217346]' : 'w-11 border-r border-[#ababab]'
          )}
        >
          {s}
        </button>
      ))}
      <button aria-label="新工作表" className="mt-1 ml-8">
        <svg width="17" height="17" viewBox="0 0 17 17" fill="none" stroke="#777">
          <circle cx="8.500" cy="8.500" r="7.800" />
          <path d="M8.500 4.500v8M4.500 8.500h8" strokeWidth="2" />
        </svg>
      </button>
      <div className="mt-[6px] mr-[21px] ml-auto flex w-[747px] items-center">
        <div className="mr-[15px] flex w-[2px] flex-col gap-[3px]">
          <span className="h-[2px] bg-[#aaa]" />
          <span className="h-[2px] bg-[#aaa]" />
          <span className="h-[2px] bg-[#aaa]" />
        </div>
        <button aria-label="向左滚动" className="flex h-[15px] w-4 items-center justify-center border border-[#ababab] bg-white">
          <svg width="4" height="8" viewBox="0 0 4 8" fill="#666"><path d="M4 0v8L0 4z" /></svg>
        </button>
        <div className="-ml-px flex flex-1 bg-[#dadada]"><div className="h-[15px] w-[94%] border border-[#ababab] bg-white" /></div>
        <button aria-label="向右滚动" className="ml-[2px] flex h-[15px] w-[15px] items-center justify-center border border-[#ababab] bg-white">
          <svg width="4" height="8" viewBox="0 0 4 8" fill="#666"><path d="M0 0v8l4-4z" /></svg>
        </button>
      </div>
    </div>
  );
}

function StatusBar({ zoom, onZoom }) {
  return (
    <div className="flex h-[22px] shrink-0 items-center border-b border-[#a9bdb4] bg-[#f3f3f3] pl-[7px] leading-[18px] text-[#333]">
      <span className="mr-auto pb-[2px]">选定目标区域，然后按 ENTER 或选择“粘贴”</span>
      <button aria-label="普通" className="flex h-full w-[38px] items-center justify-center bg-[#c6c6c6]">
        <svg width="13" height="13" viewBox="0 0 13 13" fill="none" stroke="#666"><path d="M.5.5h12v12H.5zM4.500.5v12M8.500.5v12M.5 4.500h12M.5 8.500h12" /></svg>
      </button>
      <button aria-label="页面布局" className="flex h-full w-[38px] items-center justify-center">
        <svg width="14" height="13" viewBox="0 0 14 13" fill="none" stroke="#666"><path d="M.5.5h13v12H.5zM3.500 2.500h7v8h-7zM5 4.500h4M5 6.500h4M5 8.500h4" /></svg>
      </button>
      <button aria-label="分页预览" className="flex h-full w-[38px] items-center justify-center">
        <svg width="14" height="13" viewBox="0 0 14 13" fill="none" stroke="#666"><path d="M.5.5h13v12H.5zM4.500.5v7h5v-7" /></svg>
      </button>
      <button aria-label="缩小" className="ml-[6px] h-[2px] w-[6px] bg-[#555]" />
      <div className="relative mx-1 flex items-center">
        <input
          type="range"
          min="10"
          max="400"
          value={zoom}
          onChange={(e) => onZoom(Number(e.target.value))}
          aria-label="缩放"
          className="h-3 w-[100px] appearance-none bg-[linear-gradient(#b5b5b5,#b5b5b5)] bg-[length:100%_1px] bg-center bg-no-repeat [&::-webkit-slider-thumb]:h-[11px] [&::-webkit-slider-thumb]:w-[5px] [&::-webkit-slider-thumb]:appearance-none [&::-webkit-slider-thumb]:bg-[#555]"
        />
        <span className="absolute left-1/2 h-[5px] w-px bg-[#aaa]" />
      </div>
      <button aria-label="放大">
        <svg width="8" height="8" viewBox="0 0 8 8" stroke="#555" strokeWidth="2"><path d="M4 0v8M0 4h8" /></svg>
      </button>
      <span className="mr-2 ml-[11px] pb-px">80%</span>
    </div>
  );
}

const APPS = [
  {
    name: '任务视图',
    icon: (
      <svg width="24" height="24" viewBox="0 0 24 24">
        <rect x="1" y="7" width="17" height="16" fill="#222" />
        <rect x="6" y="1" width="17" height="16" fill="#fff" />
        <path d="M6 7h12v10H6z" fill="#bbb" />
      </svg>
    ),
  },
  {
    name: '文件资源管理器',
    running: true,
    icon: (
      <svg width="24" height="24" viewBox="0 0 24 24">
        <path d="M0 3a2 2 0 0 1 2-2h7l3 3v5H0z" fill="#e0a000" />
        <path d="M0 6h9l3-2h12v17a1.500 1.500 0 0 1-1.500 1.500h-21A1.500 1.500 0 0 1 0 21z" fill="#ffcb3d" />
        <path d="M4.500 22.500V18a2 2 0 0 1 2-2h11a2 2 0 0 1 2 2v4.500z" fill="#1684d8" />
        <path d="M8 19.500h8" stroke="#0a5ca8" strokeWidth="1.500" />
      </svg>
    ),
  },
  {
    name: 'Edge',
    running: true,
    icon: (
      <svg width="24" height="24" viewBox="0 0 24 24">
        <path d="M1 11C2 4 7 0 12.500 0 19 0 24 4.500 24 10c0 4-3 6-6 6-3.500 0-4.500-1.500-3.500-3 2-3.500-1-6.500-5-6.500C5.500 6.500 2 9 1 11z" fill="#2fc5ad" />
        <path d="M17 1c4.500 1.500 7 5 7 9 0 4-3 6-6 6-3.500 0-4.500-1.500-3.500-3 2-2 2.500-9 2.500-12z" fill="#58d35a" opacity=".7" />
        <path d="M0 12c.5-4 4-6.500 8-6.500 3.500 0 6.500 2 6.500 5-4-3.500-8 0-7.500 4 .5 5 5.500 7.500 10.500 5.500C12.500 26 0 24.500 0 12z" fill="#1478d4" />
        <path d="M7.500 12.500c-1.500 6 5.500 10.500 14.500 6-4 7-14.500 7-17-.5-1-3 .5-5 2.500-5.500z" fill="#0b4a96" />
      </svg>
    ),
  },
  {
    name: 'Microsoft Store',
    icon: (
      <svg width="24" height="24" viewBox="0 0 24 24">
        <path d="M7 6V2.500A1.500 1.500 0 0 1 8.500 1h7A1.500 1.500 0 0 1 17 2.500V6" fill="none" stroke="#27a8e8" strokeWidth="2" />
        <path d="M.5 5h23v15.500a3 3 0 0 1-3 3h-17a3 3 0 0 1-3-3z" fill="#155a9c" />
        <path d="M7.500 10h4v4h-4z" fill="#f25022" /><path d="M12.500 10h4v4h-4z" fill="#7fba00" />
        <path d="M7.500 15h4v4h-4z" fill="#00a4ef" /><path d="M12.500 15h4v4h-4z" fill="#ffb900" />
      </svg>
    ),
  },
  {
    name: '计算器',
    running: true,
    icon: (
      <svg width="24" height="24" viewBox="0 0 24 24">
        <rect x="3" width="18" height="24" rx="1.500" fill="#6b7580" />
        <path d="M5 2h14v4H5z" fill="#4fd4f5" />
        <path d="M5 8h4v4H5zM10 8h4v4h-4zM15 8h4v4h-4zM5 13h4v4H5zM10 13h4v4h-4zM5 18h4v4H5zM10 18h4v4h-4z" fill="#d5dae0" />
        <path d="M15 13h4v9h-4z" fill="#0f4f94" />
      </svg>
    ),
  },
  {
    name: '微信',
    running: true,
    icon: (
      <svg width="24" height="24" viewBox="0 0 24 24">
        <path d="M9.500 2C4 2 0 5.500 0 9.800c0 2.500 1.300 4.500 3.300 6L2.500 19l3.700-1.700c1 .3 2 .4 3.300.4 5.500 0 9.500-3.500 9.500-7.900S15 2 9.500 2z" fill="#1bd66c" />
        <circle cx="6" cy="7.500" r="1.200" fill="#0b6b35" /><circle cx="12.500" cy="7.500" r="1.200" fill="#0b6b35" />
        <path d="M17 9.500c-4 0-7 2.700-7 6s3 6 7 6c.9 0 1.700-.1 2.500-.4l2.600 1.400-.6-2.400c1.500-1.200 2.500-2.700 2.500-4.600 0-3.300-3-6-7-6z" fill="#e9ecec" />
        <circle cx="14.700" cy="13.500" r="1" fill="#777" /><circle cx="19.200" cy="13.500" r="1" fill="#777" />
      </svg>
    ),
  },
  {
    name: 'Chrome',
    running: true,
    icon: (
      <svg width="24" height="24" viewBox="0 0 24 24">
        <path d="M12 12L1.600 6A12 12 0 0 1 22.400 6z" fill="#e33b2e" />
        <path d="M12 12L1.600 6A12 12 0 0 0 12 24l5.200-9z" fill="#2da44f" />
        <path d="M12 6h10.400A12 12 0 0 1 12 24l5.200-9z" fill="#fbc116" />
        <circle cx="12" cy="12" r="5.800" fill="#fff" />
        <circle cx="12" cy="12" r="4.500" fill="#3f7ee8" />
      </svg>
    ),
  },
  {
    name: '财务',
    running: true,
    icon: (
      <svg width="24" height="24" viewBox="0 0 24 24">
        <rect width="24" height="24" rx="1.500" fill="#2b55f6" />
        <path d="M6.500 3.500L12 9.500l5.500-6M12 9.500v11M6 10.500h12M6 15.500h12" fill="none" stroke="#fff" strokeWidth="2" />
      </svg>
    ),
  },
  {
    name: 'Excel',
    active: true,
    icon: (
      <svg width="24" height="24" viewBox="0 0 24 24">
        <path d="M13 3.500h10v17H13z" fill="#fff" stroke="#217346" />
        <path d="M14 7h8M14 10h8M14 13h8M14 16h8M18 4v16" stroke="#217346" />
        <path d="M0 3l14-3v24L0 21z" fill="#1e7145" />
        <path d="M4 7.500l6 9M10 7.500l-6 9" stroke="#fff" strokeWidth="2" />
      </svg>
    ),
  },
];

function Taskbar() {
  return (
    <footer className="grid h-[47px] shrink-0 grid-cols-[1fr_auto_1fr] items-center bg-[#c9ecdf] pb-px text-[#1b1b1b]">
      <button className="flex items-center gap-[7px] pl-[19px] text-left leading-4">
        <svg width="24" height="16" viewBox="0 0 24 16">
          <path d="M5 15.500a4.500 4.500 0 0 1-.5-9A7 7 0 0 1 17.500 5 5.300 5.300 0 0 1 18.500 15.500z" fill="#8fb3f0" />
          <path d="M5 15.500a4.500 4.500 0 0 1 2-8.500c3 0 4 2 5 4 3-2 7-1 11 0-.5 3-2 4.500-4.500 4.500z" fill="#c4d7fa" />
        </svg>
        <span>12°C<br />阴</span>
      </button>
      <div className="flex items-center pl-[11px]">
        <button aria-label="开始" className="mr-[14px]">
          <svg width="23" height="23" viewBox="0 0 23 23">
            <path d="M0 0h11v11H0z" fill="#38bdf2" /><path d="M12 0h11v11H12z" fill="#22a6e6" />
            <path d="M0 12h11v11H0z" fill="#1593dc" /><path d="M12 12h11v11H12z" fill="#0c7fd0" />
          </svg>
        </button>
        <label className="mr-1 flex h-[31px] w-[218px] items-center rounded-full border border-[#b5d6c9] bg-[#eef9f4] pr-1 pl-[10px]">
          <Search size={16} strokeWidth={2} />
          <input aria-label="搜索" placeholder="搜索" className="ml-[9px] w-24 flex-1 bg-transparent text-[14px] placeholder:text-[#555]" />
          <svg width="48" height="28" viewBox="0 0 48 28">
            <path d="M3 19C-1 14 3 9 7 8c0-6 12-7 13-3 4 4-2 7-4 10-2 4-8 8-13 4z" fill="#e3a862" />
            <path d="M7 8c3 5 8 7 12 6l-3 4c-5 0-9-3-11-8z" fill="#c9404c" />
            <path d="M9 18l4 2 6 1 3 5-4-1-3 2-2-4-4-1z" fill="#d8566a" />
            <path d="M27 5c3-2 12-2 15 0l-1.500 13h-12z" fill="#5b4a86" />
            <path d="M28 14h13l-.5 4h-12z" fill="#3a2c60" />
            <path d="M23 16c2 3 5 3 11.500 3S44 19 46 16c2 4-2 8-11.500 8S21 20 23 16z" fill="#6f5f9e" />
          </svg>
        </label>
        {APPS.map((a) => (
          <button
            key={a.name}
            aria-label={a.name}
            className={clsx('relative mx-[2px] flex h-[39px] w-10 items-center justify-center rounded-md', a.active && 'bg-[#e6f6f0]')}
          >
            {a.icon}
            {a.running && <span className="absolute -bottom-px h-[3px] w-[6px] rounded-full bg-[#6f8a80]" />}
            {a.active && <span className="absolute bottom-0 h-[3px] w-4 rounded-full bg-[#0a78d4]" />}
          </button>
        ))}
      </div>
      <div className="flex items-center justify-end pr-[19px]">
        <button aria-label="显示隐藏的图标" className="mr-4"><ChevronUp size={16} strokeWidth={2} /></button>
        <button aria-label="更新" className="mr-[14px]">
          <svg width="18" height="18" viewBox="0 0 18 18" fill="none" stroke="#1b1b1b" strokeWidth="1.400">
            <path d="M1.500 8A7.500 7.500 0 0 1 15 4.500M15.500 1v4h-4M8 16.500A7 7 0 0 1 2.500 12M2 16v-4h4" />
            <circle cx="12.500" cy="12.500" r="4.500" fill="#0a78d4" stroke="none" />
          </svg>
        </button>
        <button className="mr-[23px] text-[15px]">中</button>
        <button className="mr-[22px] text-[15px]">拼</button>
        <button aria-label="网络" className="mr-[7px]">
          <svg width="17" height="17" viewBox="0 0 17 17" fill="none" stroke="#1b1b1b" strokeWidth="1.200">
            <path d="M10 2H1v11h12V9M7 13v3M4 16.400h7M12.500 1h3.500v4l-1 1.500h-1.500L12.500 5zM14.300 6.500V10" />
          </svg>
        </button>
        <button aria-label="音量" className="mr-[13px]">
          <svg width="18" height="15" viewBox="0 0 18 15" fill="none" stroke="#1b1b1b" strokeWidth="1.100">
            <path d="M1 5h3l4-4v13L4 10H1zM10.500 5c1 1.500 1 3.500 0 5M12.800 3.200c2 2.500 2 6 0 8.600M15 1.500c2.700 3.500 2.700 8.500 0 12" />
          </svg>
        </button>
        <time className="text-right leading-4">15:06<br />2025/12/16</time>
      </div>
    </footer>
  );
}

export default function App() {
  const [tab, setTab] = useState('开始');
  const [sheet, setSheet] = useState('1月');
  const [formula, setFormula] = useState('B');
  const [zoom, setZoom] = useState(158);

  return (
    <div className="flex h-screen flex-col overflow-hidden bg-[#e6e6e6] font-['Open_Sans','Noto_Sans_CJK_SC',sans-serif] text-[12px]">
      <TitleBar />
      <TabBar tab={tab} onTab={setTab} />
      <Ribbon />
      <FormulaBar value={formula} onChange={setFormula} />
      <main className="flex min-h-0 flex-1">
        <Sheet />
        <VerticalScroll />
      </main>
      <SheetTabs sheet={sheet} onSheet={setSheet} />
      <StatusBar zoom={zoom} onZoom={setZoom} />
      <Taskbar />
    </div>
  );
}
